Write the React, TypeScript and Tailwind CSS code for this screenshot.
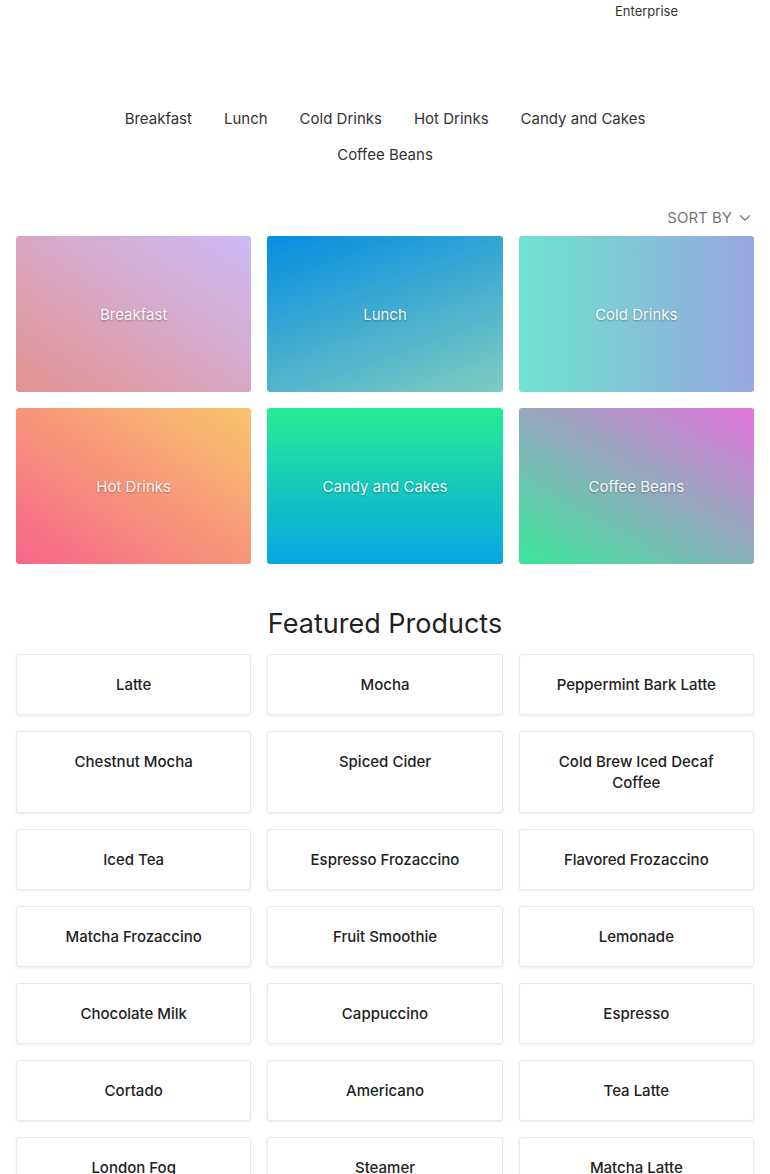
import { ChevronDown } from 'lucide-react';

const categories = ['Breakfast', 'Lunch', 'Cold Drinks', 'Hot Drinks', 'Candy and Cakes', 'Coffee Beans'];

const tiles = [
  { name: 'Breakfast', bg: 'bg-[linear-gradient(to_top_right,#e59390,#cbbbf7)]' },
  { name: 'Lunch', bg: 'bg-[linear-gradient(160deg,#058de2,#7fccbf)]' },
  { name: 'Cold Drinks', bg: 'bg-[linear-gradient(to_right,#6de3cf,#98a6df)]' },
  { name: 'Hot Drinks', bg: 'bg-[linear-gradient(to_top_right,#f7658b,#f8c56b)]' },
  { name: 'Candy and Cakes', bg: 'bg-[linear-gradient(to_bottom,#26ec93,#07a6e4)]' },
  { name: 'Coffee Beans', bg: 'bg-[linear-gradient(30deg,#39e69a,#e474dc)]' },
];

const products = [
  'Latte', 'Mocha', 'Peppermint Bark Latte',
  'Chestnut Mocha', 'Spiced Cider', 'Cold Brew Iced Decaf Coffee',
  'Iced Tea', 'Espresso Frozaccino', 'Flavored Frozaccino',
  'Matcha Frozaccino', 'Fruit Smoothie', 'Lemonade',
  'Chocolate Milk', 'Cappuccino', 'Espresso',
  'Cortado', 'Americano', 'Tea Latte',
  'London Fog', 'Steamer', 'Matcha Latte',
];

export default function App() {
  return (
    <div className="min-h-[1174px] bg-white font-['Inter',sans-serif] text-[#222]">
      {/* header */}
      <div className="flex h-[101px] justify-end pr-[92px] pt-[3px]">
        <span className="text-[13px] leading-[16px] text-[#333]">Enterprise</span>
      </div>

      {/* category nav */}
      <nav className="mx-auto flex max-w-[560px] flex-wrap justify-center text-[15px] leading-[36px] text-[#333]">
        {categories.map((c) => (
          <a key={c} className="px-4">
            {c}
          </a>
        ))}
      </nav>

      <div className="px-4">
        {/* sort */}
        <div className="mt-[35px] flex h-[20px] items-center justify-end gap-1 text-[15px] text-[#777]">
          <span>SORT BY</span>
          <ChevronDown size={18} strokeWidth={1.5} />
        </div>

        {/* category tiles */}
        <div className="mt-2 grid grid-cols-3 gap-4">
          {tiles.map((t) => (
            <div
              key={t.name}
              className={`${t.bg} flex h-[156px] items-center justify-center rounded-[3px] pt-[2px] text-[15px] text-white/95 [text-shadow:0_1px_2px_rgba(0,0,0,0.3)]`}
            >
              {t.name}
            </div>
          ))}
        </div>

        <h2 className="mt-[42px] text-center text-[27px] leading-[36px] text-[#222]">Featured Products</h2>

        <div className="mt-[12px] grid grid-cols-3 gap-4">
          {products.map((p) => (
            <div
              key={p}
              className="rounded-[3px] border border-[#e8e8e8] bg-white px-4 py-[19px] text-center text-[15px] leading-[21px] font-medium text-[#222] shadow-[0_1px_3px_rgba(0,0,0,0.08)]"
            >
              {p}
            </div>
          ))}
        </div>
      </div>
    </div>
  );
}
